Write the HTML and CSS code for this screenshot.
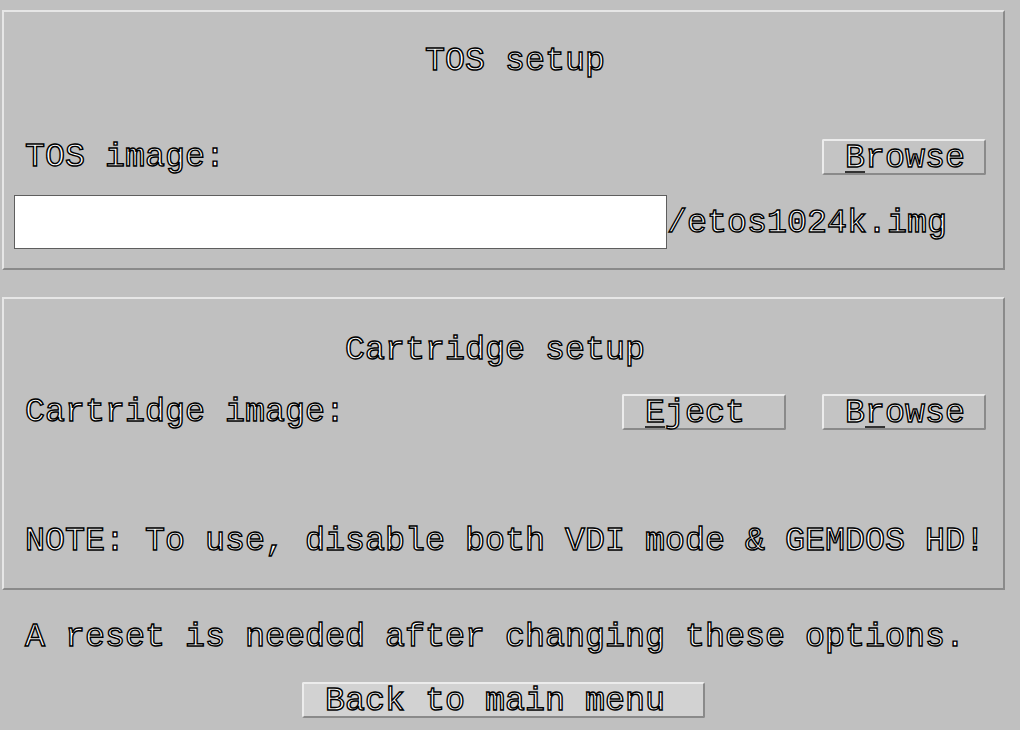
FILE: index.html
```html
<!DOCTYPE html>
<html>
<head>
<meta charset="utf-8">
<link rel="stylesheet" href="styles.css">
</head>
<body>
<div class="page">
  <section class="box box-tos">
    <div class="title title-tos">TOS setup</div>
    <div class="row row-tos">
      <span class="label">TOS image:</span>
      <button class="btn"><u>B</u>rowse</button>
    </div>
    <div class="row-path">
      <div class="field"></div>
      <span class="path">/etos1024k.img</span>
    </div>
  </section>

  <section class="box box-cart">
    <div class="title title-cart">Cartridge setup</div>
    <div class="row row-cart">
      <span class="label">Cartridge image:</span>
      <div class="btns">
        <button class="btn"><u>E</u>ject</button>
        <button class="btn">B<u>r</u>owse</button>
      </div>
    </div>
    <div class="note">NOTE: To use, disable both VDI mode &amp; GEMDOS HD!</div>
  </section>

  <div class="reset">A reset is needed after changing these options.</div>
  <div class="back-row">
    <button class="btn btn-default">Back to main menu</button>
  </div>
</div>
</body>
</html>
```

FILE: styles.css
```css
* { box-sizing: border-box; }

html, body {
  margin: 0;
  padding: 0;
  background: #c0c0c0;
  width: 1020px;
  height: 730px;
  overflow: hidden;
}

body, button {
  font-family: "Liberation Mono", "DejaVu Sans Mono", monospace;
  font-size: 33.34px;
  line-height: 32px;
  color: #ffffff;
  -webkit-text-stroke: 1.4px #000;
}

.title, .label, .path, .note, .reset, .btn {
  white-space: pre;
}

.page {
  padding: 10px 15px 0 2px;
}

.box {
  border-top: 2px solid #e6e6e6;
  border-left: 2px solid #e6e6e6;
  border-right: 2px solid #8a8a8a;
  border-bottom: 2px solid #8a8a8a;
}

.box-tos {
  height: 260px;
  padding: 33px 17px 20px 0;
}

.title {
  height: 32px;
}

.title-tos { padding-left: 421px; }
.title-cart { padding-left: 341px; }

.row {
  display: flex;
  justify-content: space-between;
  align-items: center;
  height: 36px;
  padding-left: 21px;
}

.row-tos { margin-top: 62px; }

.row-path {
  display: flex;
  align-items: center;
  margin-top: 20px;
  padding-left: 10px;
  height: 54px;
}

.field {
  width: 653px;
  height: 54px;
  background: #ffffff;
  border: 1px solid #5e5e5e;
}

.path {
  padding-top: 2px;
}

.btn {
  display: block;
  width: 164px;
  height: 36px;
  margin: 0;
  padding: 1px 0 0 21px;
  text-align: left;
  background: #c4c4c4;
  border-top: 2px solid #ececec;
  border-left: 2px solid #ececec;
  border-right: 2px solid #8a8a8a;
  border-bottom: 2px solid #8a8a8a;
  border-radius: 2px;
}

.btn u {
  text-decoration: underline;
  text-decoration-color: #333;
  text-decoration-thickness: 2px;
  text-underline-offset: 4px;
}

.btns {
  display: flex;
  gap: 36px;
}

.box-cart {
  margin-top: 27px;
  height: 293px;
  padding: 35px 17px 32px 0;
}

.row-cart { margin-top: 28px; }

.note {
  margin-top: 95px;
  padding-left: 21px;
  height: 32px;
}

.reset {
  margin-top: 31px;
  padding-left: 23px;
  height: 32px;
}

.back-row {
  display: flex;
  justify-content: center;
  margin-top: 29px;
}

.btn-default {
  width: 403px;
  background: #d2d2d2;
}
```
